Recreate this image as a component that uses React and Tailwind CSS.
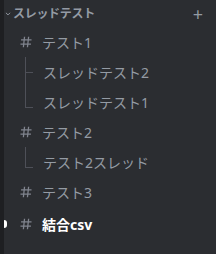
import React from 'react';

const font = { fontFamily: '"Noto Sans", "Noto Sans CJK JP", sans-serif' };

function Hash({ className = '' }) {
  return (
    <svg width="14" height="14" viewBox="0 0 24 24" className={className}>
      <path
        d="M9.5 3 7.5 21M16.5 3l-2 18M3.5 8.5h18M2.5 15.5h18"
        stroke="currentColor"
        strokeWidth="2.2"
        fill="none"
      />
    </svg>
  );
}

function Channel({ name, active }) {
  return (
    <div className={'relative flex items-center h-[30px] pl-[19px]' + (active ? ' mt-[2px]' : '')}>
      {active && <div className="absolute left-[4px] top-[11px] w-[3px] h-[8px] rounded-r bg-white" />}
      <Hash className="text-[#80848e] mr-[9px]" />
      <span className={active ? 'text-white font-bold text-[14px]' : 'text-[#949ba4] text-[14px]'}>{name}</span>
    </div>
  );
}

function Thread({ name, last }) {
  return (
    <div className="relative flex items-center h-[30px] pl-[43px]">
      {!last && <div className="absolute left-[25px] top-0 bottom-0 w-[1px] bg-[#4e5058]" />}
      {last && <div className="absolute left-[25px] top-0 h-[20px] w-[1px] bg-[#4e5058]" />}
      <div className={'absolute left-[25px] w-[8px] h-[1px] bg-[#4e5058] ' + (last ? 'top-[20px]' : 'top-[15px]')} />
      <span className="text-[#949ba4] text-[14px]">{name}</span>
    </div>
  );
}

export default function App() {
  return (
    <div className="w-[216px] h-[254px] flex bg-[#2b2d31] overflow-hidden" style={font}>
      <div className="w-[4px] bg-[#1e1f22]" />
      <div className="flex-1 relative">
        <div className="flex items-center h-[27px] pt-[1px]">
          <svg width="6" height="6" viewBox="0 0 10 10" className="ml-[1px] mr-[2px] text-[#949ba4]">
            <path d="M1.5 3 5 6.5 8.5 3" stroke="currentColor" strokeWidth="1.6" fill="none" />
          </svg>
          <span className="text-[12px] font-bold text-[#949ba4] tracking-tight">スレッドテスト</span>
          <span className="ml-auto mr-[13px] text-[#949ba4] text-[18px] leading-none">+</span>
        </div>
        <div className="-ml-[4px]">
          <Channel name="テスト1" />
          <Thread name="スレッドテスト2" />
          <Thread name="スレッドテスト1" last />
          <Channel name="テスト2" />
          <Thread name="テスト2スレッド" last />
          <Channel name="テスト3" />
          <Channel name="結合csv" active />
        </div>
      </div>
    </div>
  );
}
